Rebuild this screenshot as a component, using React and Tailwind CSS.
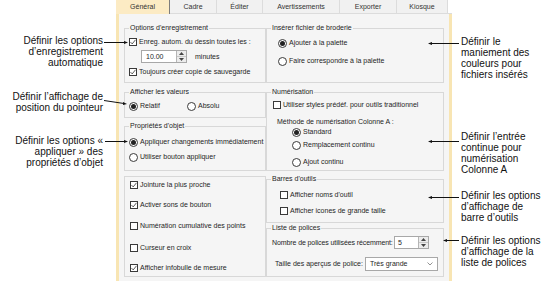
import React from 'react';

const font = "font-['Liberation_Sans',Arial,sans-serif]";

function Check({ checked }) {
  return (
    <span className="flex h-[8px] w-[8px] shrink-0 items-center justify-center border border-[#3a3a3a] bg-white">
      {checked && (
        <svg width="6" height="6" viewBox="0 0 6 6">
          <path d="M0.5 3.1L2.2 4.9L5.5 0.8" fill="none" stroke="#333" strokeWidth="0.8" />
        </svg>
      )}
    </span>
  );
}

function Radio({ on }) {
  return (
    <span className="flex h-[9px] w-[9px] shrink-0 items-center justify-center rounded-full border border-[#3a3a3a] bg-white">
      {on && <span className="h-[5px] w-[5px] rounded-full bg-[#222]" />}
    </span>
  );
}

function Row({ className = '', children }) {
  return <div className={`flex h-[10px] items-center gap-[2px] whitespace-nowrap ${className}`}>{children}</div>;
}

function Group({ title, className = '', children }) {
  return (
    <fieldset className={`border border-[#d8d8d8] ${className}`}>
      <legend className="ml-[4px] px-[1px] leading-[10px]">{title}</legend>
      {children}
    </fieldset>
  );
}

function Arrows() {
  return (
    <div className="flex w-[10px] flex-col border-l border-[#b5b5b5] bg-[#ececec]">
      <div className="flex flex-1 items-center justify-center border-b border-[#c8c8c8]">
        <svg width="5" height="3" viewBox="0 0 5 3"><path d="M0 3L2.5 0L5 3Z" fill="#444" /></svg>
      </div>
      <div className="flex flex-1 items-center justify-center">
        <svg width="5" height="3" viewBox="0 0 5 3"><path d="M0 0L2.5 3L5 0Z" fill="#444" /></svg>
      </div>
    </div>
  );
}

const tabs = [
  ['Général', 'w-[54px] bg-[#fcebc4]'],
  ['Cadre', 'w-[47px] bg-[#f1f1f1] border-b border-[#dcdcdc]'],
  ['Éditer', 'w-[46px] bg-[#f1f1f1] border-b border-[#dcdcdc]'],
  ['Avertissements', 'w-[77px] bg-[#f1f1f1] border-b border-[#dcdcdc]'],
  ['Exporter', 'w-[57px] bg-[#f1f1f1] border-b border-[#dcdcdc]'],
  ['Kiosque', 'w-[51px] bg-[#f1f1f1] border-b border-[#dcdcdc]'],
];

function Dialog() {
  return (
    <div className="flex w-[336px] shrink-0 flex-col text-[7px] leading-[10px] text-[#1e1e1e]">
      <div className="flex h-[14px] shrink-0">
        {tabs.map(([label, cls]) => (
          <div key={label} className={`flex items-center justify-center border-r border-[#7d7d7d] text-[#333] ${cls}`}>
            {label}
          </div>
        ))}
        <div className="flex-1 border-b border-[#dcdcdc]" />
      </div>

      <div className="flex flex-1 border-x-[3px] border-[#f8e5b3] bg-[#f5f5f5] px-[5px] pt-[9px]">
        {/* left column */}
        <div className="flex w-[142px] flex-col">
          <Group title="Options d'enregistrement" className="h-[60px]">
            <Row className="mt-[4px] pl-[4px]">
              <Check checked />
              <span>Enreg. autom. du dessin toutes les :</span>
            </Row>
            <div className="mt-[3px] flex h-[13px] items-center pl-[16px]">
              <div className="flex h-[13px] w-[46px] border border-[#a8a8a8] bg-white">
                <span className="flex-1 pl-[4px] leading-[11px]">10.00</span>
                <Arrows />
              </div>
              <span className="ml-[8px]">minutes</span>
            </div>
            <Row className="mt-[4px] pl-[4px]">
              <Check checked />
              <span>Toujours créer copie de sauvegarde</span>
            </Row>
          </Group>

          <Group title="Afficher les valeurs" className="mt-[4px] h-[31px]">
            <Row className="mt-[4px] pl-[4px]">
              <Radio on />
              <span className="w-[45px]">Relatif</span>
              <Radio />
              <span>Absolu</span>
            </Row>
          </Group>

          <Group title="Propriétés d'objet" className="mt-[3px] h-[50px]">
            <Row className="mt-[6px] pl-[4px]">
              <Radio on />
              <span>Appliquer changements immédiatement</span>
            </Row>
            <Row className="mt-[5px] pl-[4px]">
              <Radio />
              <span>Utiliser bouton appliquer</span>
            </Row>
          </Group>

          <div className="mt-[5px] h-[101px] border border-[#d8d8d8] pl-[5px] pt-[3px]">
            <Row>
              <Check checked />
              <span>Jointure la plus proche</span>
            </Row>
            <Row className="mt-[10px]">
              <Check checked />
              <span>Activer sons de bouton</span>
            </Row>
            <Row className="mt-[11px]">
              <Check />
              <span>Numération cumulative des points</span>
            </Row>
            <Row className="mt-[12px]">
              <Check />
              <span>Curseur en croix</span>
            </Row>
            <Row className="mt-[10px]">
              <Check checked />
              <span>Afficher infobulle de mesure</span>
            </Row>
          </div>
        </div>

        {/* right column */}
        <div className="flex w-[178px] flex-col">
          <Group title="Insérer fichier de broderie" className="h-[60px]">
            <Row className="mt-[5px] pl-[11px]">
              <Radio on />
              <span>Ajouter à la palette</span>
            </Row>
            <Row className="mt-[8px] pl-[11px]">
              <Radio />
              <span>Faire correspondre à la palette</span>
            </Row>
          </Group>

          <Group title="Numérisation" className="mt-[4px] h-[84px]">
            <Row className="mt-[3px] pl-[6px]">
              <Check />
              <span>Utiliser styles prédéf. pour outils traditionnel</span>
            </Row>
            <div className="mt-[7px] h-[10px] pl-[10px]">Méthode de numérisation Colonne A :</div>
            <Row className="pl-[25px]">
              <Radio on />
              <span>Standard</span>
            </Row>
            <Row className="mt-[3px] pl-[25px]">
              <Radio />
              <span>Remplacement continu</span>
            </Row>
            <Row className="mt-[7px] pl-[25px]">
              <Radio />
              <span>Ajout continu</span>
            </Row>
          </Group>

          <Group title="Barres d'outils" className="mt-[3px] h-[49px]">
            <Row className="mt-[6px] pl-[13px]">
              <Check />
              <span>Afficher noms d'outil</span>
            </Row>
            <Row className="mt-[6px] pl-[13px]">
              <Check />
              <span>Afficher icones de grande taille</span>
            </Row>
          </Group>

          <Group title="Liste de polices" className="h-[54px]">
            <div className="mt-[3px] flex h-[13px] items-center whitespace-nowrap pl-[5px]">
              <span className="tracking-[-0.1px]">Nombre de polices utilisées récemment:</span>
              <div className="ml-auto mr-[14px] flex h-[13px] w-[35px] shrink-0 border border-[#a8a8a8] bg-white">
                <span className="flex-1 pl-[3px] leading-[11px]">5</span>
                <Arrows />
              </div>
            </div>
            <div className="mt-[8px] flex h-[14px] items-center whitespace-nowrap pl-[8px]">
              <span>Taille des aperçus de police:</span>
              <div className="ml-auto mr-[5px] flex h-[14px] w-[73px] shrink-0 items-center border border-[#a8a8a8] bg-white pl-[4px] pr-[4px]">
                <span className="flex-1">Très grande</span>
                <svg width="6" height="4" viewBox="0 0 6 4">
                  <path d="M0.5 0.5L3 3L5.5 0.5" fill="none" stroke="#777" strokeWidth="0.8" />
                </svg>
              </div>
            </div>
          </Group>
        </div>
      </div>
    </div>
  );
}

function Note({ className = '', lines }) {
  return (
    <div className={className}>
      {lines.map((l) => (
        <div key={l}>{l}</div>
      ))}
    </div>
  );
}

export default function App() {
  return (
    <div className={`relative flex h-[281px] w-[553px] overflow-hidden bg-white ${font}`}>
      <div className="w-[116px] shrink-0 pr-[13px] text-right text-[10px] leading-[11px] text-[#111]">
        <Note className="mt-[35px]" lines={['Définir les options', "d’enregistrement", 'automatique']} />
        <Note className="mt-[23px]" lines={["Définir l’affichage de", 'position du pointeur']} />
        <Note className="mt-[22px]" lines={['Définir les options «', 'appliquer » des', 'propriétés d’objet']} />
      </div>

      <Dialog />

      <div className="flex-1 pl-[9px] text-[10px] leading-[11px] text-[#111]">
        <Note className="mt-[36px]" lines={['Définir le', 'maniement des', 'couleurs pour', 'fichiers insérés']} />
        <Note className="mt-[51px]" lines={["Définir l’entrée", 'continue pour', 'numérisation', 'Colonne A']} />
        <Note className="mt-[15px]" lines={['Définir les options', "d’affichage de", "barre d’outils"]} />
        <Note className="mt-[12px]" lines={['Définir les options', "d’affichage de la", 'liste de polices']} />
      </div>

      {/* leader lines */}
      <svg className="pointer-events-none absolute inset-0" width="553" height="281">
        <g stroke="#111" strokeWidth="1" fill="#111">
          <line x1="104" y1="42.5" x2="125" y2="42.5" />
          <path d="M128 42.5L124 41L124 44Z" stroke="none" />
          <line x1="104" y1="100.5" x2="124" y2="103.5" />
          <path d="M127 104L123 102L123 105Z" stroke="none" />
          <line x1="105" y1="141.5" x2="125" y2="141.5" />
          <path d="M128 141.5L124 140L124 143Z" stroke="none" />

          <line x1="431" y1="43.5" x2="459" y2="43.5" />
          <path d="M428 43.5L432 42L432 45Z" stroke="none" />
          <line x1="431" y1="141.5" x2="459" y2="141.5" />
          <path d="M428 141.5L432 140L432 143Z" stroke="none" />
          <line x1="431" y1="197.5" x2="459" y2="197.5" />
          <path d="M428 197.5L432 196L432 199Z" stroke="none" />
          <line x1="446" y1="240.5" x2="459" y2="240.5" />
          <path d="M443 240.5L447 239L447 242Z" stroke="none" />
        </g>
      </svg>
    </div>
  );
}
